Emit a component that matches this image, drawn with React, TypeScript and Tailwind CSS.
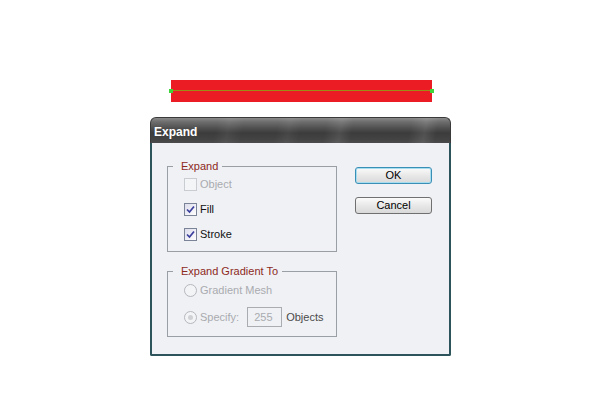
import { ReactNode } from "react"

const Check = ({ checked, disabled, label }: { checked?: boolean; disabled?: boolean; label: string }) => (
  <div className="flex items-center h-4 gap-[3px]">
    <div
      className={`w-[13px] h-[13px] border flex items-center justify-center ${
        disabled
          ? "border-[#c9ccd1] bg-[#f4f5f7]"
          : "border-[#7a8496] bg-[linear-gradient(135deg,#dcdcec,#ffffff)]"
      }`}
    >
      {checked && (
        <svg width="9" height="9" viewBox="0 0 9 9">
          <path d="M1 4.5 L3.5 7 L8 1.5" fill="none" stroke="#3b3f9c" strokeWidth="1.7" />
        </svg>
      )}
    </div>
    <span className={disabled ? "text-[#a9abaf]" : "text-[#111]"}>{label}</span>
  </div>
)

const Radio = ({ selected }: { selected?: boolean }) => (
  <div className="w-[13px] h-[13px] rounded-full border border-[#b4b7bc] bg-[#f3f4f6] flex items-center justify-center">
    {selected && <div className="w-[5px] h-[5px] rounded-full bg-[#cfd1d5]" />}
  </div>
)

const Group = ({ title, children, className }: { title: string; children: ReactNode; className: string }) => (
  <div className={`relative border border-[#9a9fa6] ${className}`}>
    <span className="absolute left-[5px] top-[-8px] pl-[8px] pr-[4px] leading-[14px] bg-[#f0f1f5] text-[#8d2a1c]">
      {title}
    </span>
    {children}
  </div>
)

const Btn = ({ label, focused }: { label: string; focused?: boolean }) => (
  <button
    className={`w-[77px] h-[17px] rounded-[3px] border text-[11px] leading-none text-black bg-[linear-gradient(to_bottom,#fbfbfb,#e8e8e8_50%,#d9d9d9)] ${
      focused ? "border-[#3a8fb7] shadow-[0_0_0_1px_#a8dcef_inset]" : "border-[#707070]"
    }`}
  >
    {label}
  </button>
)

export default function App() {
  return (
    <div className="w-[600px] h-[407px] bg-white overflow-hidden font-['Liberation_Sans',Arial,sans-serif] text-[11px]">
      <div className="pt-[80px] pl-[171px]">
        <div className="relative w-[261px] h-[22px] bg-[#ec1c24]">
          <div className="absolute left-0 right-0 top-[10px] h-px bg-[#9a8f14]" />
          <div className="absolute left-[-2px] top-[9px] w-[4px] h-[4px] bg-[#3ed43a]" />
          <div className="absolute right-[-2px] top-[9px] w-[4px] h-[4px] bg-[#3ed43a]" />
        </div>
      </div>

      <div className="ml-[150px] mt-[15px] w-[301px]">
        <div className="h-[26px] rounded-t-[6px] border border-b-0 border-[#3a3a3a] pl-[3px] pt-[3px] flex items-center bg-[linear-gradient(100deg,transparent_22%,rgba(255,255,255,0.06)_26%,transparent_31%,transparent_42%,rgba(255,255,255,0.05)_46%,transparent_50%,transparent_58%,rgba(255,255,255,0.09)_63%,transparent_67%,transparent_86%,rgba(255,255,255,0.10)_91%,transparent_95%),linear-gradient(to_bottom,#8a8a8a_0%,#6e6e6e_15%,#505050_40%,#3c3c3c_60%,#434343_85%,#4c4c4c_100%)]">
          <span className="text-white font-bold text-[12px] leading-none">Expand</span>
        </div>
        <div className="h-[213px] bg-[#f0f1f5] border-x-2 border-b-2 border-[#2d545a] rounded-b-[2px] pl-[15px] pt-[23px] flex gap-[18px]">
          <div className="flex flex-col gap-[19px]">
            <Group title="Expand" className="w-[170px] h-[86px] pt-[9px] pl-[16px] flex flex-col gap-[9px]">
              <Check disabled label="Object" />
              <Check checked label="Fill" />
              <Check checked label="Stroke" />
            </Group>
            <Group title="Expand Gradient To" className="w-[170px] h-[66px] pt-[10px] pl-[16px] flex flex-col gap-[9px]">
              <div className="flex items-center h-4 gap-[3px]">
                <Radio />
                <span className="text-[#a9abaf]">Gradient Mesh</span>
              </div>
              <div className="flex items-center h-[20px]">
                <Radio selected />
                <span className="ml-[3px] text-[#a9abaf]">Specify:</span>
                <div className="ml-[8px] w-[35px] h-[20px] border border-[#a9acb1] flex items-center pl-[6px] text-[#a9abaf]">
                  255
                </div>
                <span className="ml-[4px] text-[#4a4a4a]">Objects</span>
              </div>
            </Group>
          </div>
          <div className="flex flex-col gap-[13px] pt-px">
            <Btn label="OK" focused />
            <Btn label="Cancel" />
          </div>
        </div>
      </div>
    </div>
  )
}
